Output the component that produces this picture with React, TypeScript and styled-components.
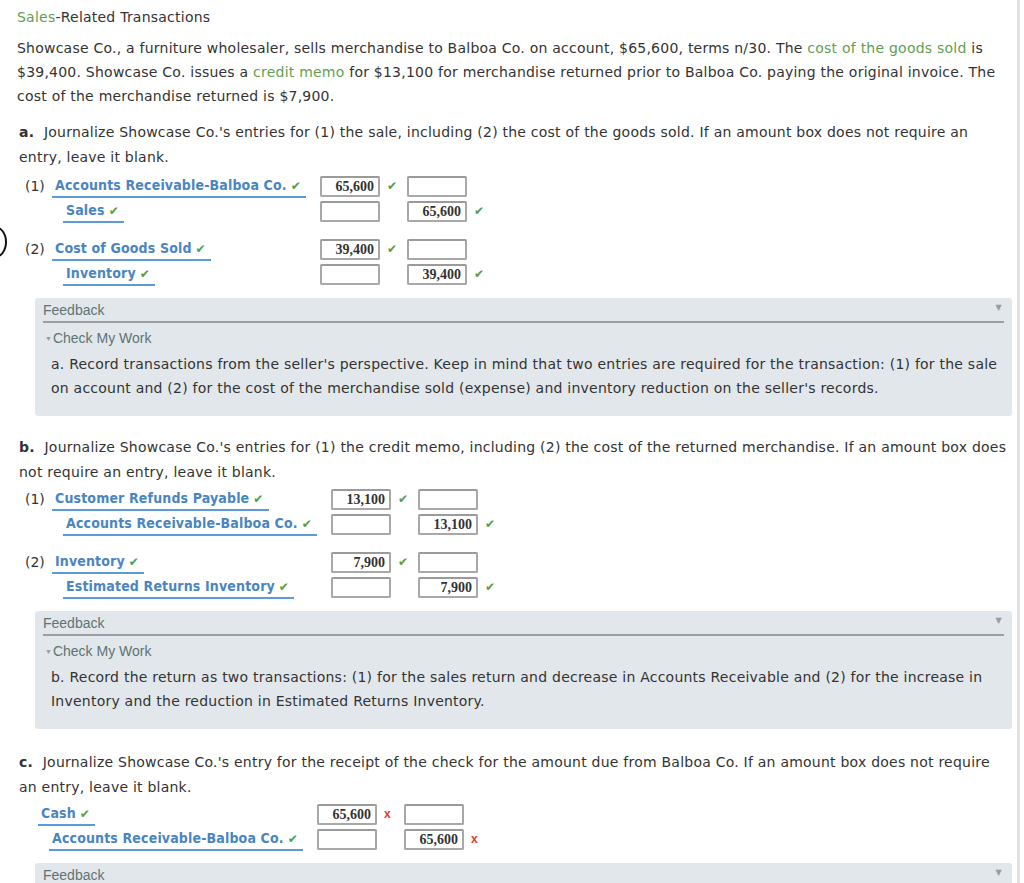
import React from 'react';
import styled, { createGlobalStyle } from 'styled-components';

const GlobalStyle = createGlobalStyle`
  html, body {
    margin: 0;
    padding: 0;
    background: #fff;
  }
  body {
    font-family: "DejaVu Sans", Verdana, sans-serif;
    font-size: 14px;
    letter-spacing: 0.23px;
    color: #333;
  }
`;

type Mark = 'ok' | 'bad';

interface Line {
  account: string;
  indent?: boolean;
  debit?: string;
  credit?: string;
}

interface Group {
  num?: string;
  lines: Line[];
}

const Page = styled.div`
  position: relative;
  width: 1017px;
  min-height: 883px;
  border-right: 3px solid #e2e2e2;
  box-sizing: content-box;
  overflow: hidden;
  padding-bottom: 20px;
`;

const Title = styled.div`
  padding: 7px 0 0 17px;
  line-height: 20px;
`;

const Intro = styled.p`
  margin: 9px 0 0;
  padding: 0 4px 0 17px;
  line-height: 24px;
`;

const Green = styled.span`
  color: #5f9f52;
`;

const Question = styled.p<{ $gap: number }>`
  margin: ${(p) => p.$gap}px 0 0;
  padding: 0 10px 0 19px;
  line-height: 25px;
`;

const Letter = styled.b`
  font-weight: bold;
  margin-right: 5px;
`;

const Journal = styled.div<{ $left: number; $top: number; $numbered: boolean }>`
  display: grid;
  grid-template-columns: ${(p) => (p.$numbered ? '27px' : '0px')} auto 60px 27px 60px auto;
  justify-content: start;
  align-items: center;
  margin: ${(p) => p.$top}px 0 0 ${(p) => p.$left}px;
`;

const Spacer = styled.div`
  grid-column: 1 / -1;
  height: 13px;
`;

const Num = styled.div`
  height: 25px;
  line-height: 25px;
  letter-spacing: 0;
`;

const AccountCell = styled.div<{ $indent?: boolean }>`
  height: 25px;
  display: flex;
  align-items: center;
  padding-left: ${(p) => (p.$indent ? 11 : 0)}px;
  padding-right: 14px;
`;

const Account = styled.span`
  display: inline-block;
  font-family: "DejaVu Sans Condensed", "DejaVu Sans", sans-serif;
  font-weight: bold;
  font-size: 14px;
  letter-spacing: 0.15px;
  line-height: 18px;
  color: #4a85c2;
  padding: 0 5px 1px 3px;
  border-bottom: 2px solid #5c9bd9;
  white-space: nowrap;
`;

const Tick = styled.span`
  color: #4fa046;
  font-family: "DejaVu Sans", sans-serif;
  font-weight: normal;
  font-size: 12px;
  margin-left: 4px;
`;

const Amount = styled.div`
  box-sizing: border-box;
  width: 60px;
  height: 21px;
  border: 2px solid #a8a8a8;
  border-top-color: #9a9a9a;
  border-radius: 2px;
  background: #fff;
  font-family: "Liberation Serif", "Times New Roman", serif;
  font-weight: bold;
  font-size: 14px;
  letter-spacing: 0;
  line-height: 17px;
  color: #333;
  text-align: right;
  padding-right: 4px;
`;

const MarkCell = styled.div<{ $mark: Mark }>`
  height: 25px;
  line-height: 25px;
  padding-left: 7px;
  font-size: 12px;
  font-family: ${(p) => (p.$mark === 'ok' ? '"DejaVu Sans", sans-serif' : '"Liberation Sans", Arial, sans-serif')};
  font-weight: ${(p) => (p.$mark === 'ok' ? 'normal' : 'bold')};
  color: ${(p) => (p.$mark === 'ok' ? '#4fa046' : '#e8382f')};
`;

const FeedbackBox = styled.div`
  margin: 11px 5px 0 35px;
  padding: 3px 8px 16px;
  background: #e2e7eb;
  border-radius: 3px;
  position: relative;
`;

const FeedbackHead = styled.div`
  font-family: "Liberation Sans", Arial, sans-serif;
  font-size: 14px;
  letter-spacing: 0;
  line-height: 18px;
  color: #5e7474;
  border-bottom: 2px solid #9b9fa2;
  padding-bottom: 2px;
`;

const Arrow = styled.span`
  position: absolute;
  right: 10px;
  top: 5px;
  font-size: 8px;
  color: #9a9a9a;
`;

const CheckHead = styled.div`
  margin-top: 6px;
  font-family: "Liberation Sans", Arial, sans-serif;
  font-size: 14px;
  letter-spacing: 0;
  line-height: 18px;
  color: #5e7474;
`;

const SmallArrow = styled.span`
  font-size: 7px;
  color: #9a9a9a;
  margin: 0 1px 0 2px;
  vertical-align: 2px;
`;

const FeedbackText = styled.p`
  margin: 4px 0 0 8px;
  line-height: 24px;
`;

const Cursor = styled.div`
  position: absolute;
  left: -17px;
  top: 226px;
  width: 20px;
  height: 28px;
  border: 2.5px solid #111;
  border-radius: 50%;
`;

const partA: Group[] = [
  {
    num: '(1)',
    lines: [
      { account: 'Accounts Receivable-Balboa Co.', debit: '65,600' },
      { account: 'Sales', indent: true, credit: '65,600' },
    ],
  },
  {
    num: '(2)',
    lines: [
      { account: 'Cost of Goods Sold', debit: '39,400' },
      { account: 'Inventory', indent: true, credit: '39,400' },
    ],
  },
];

const partB: Group[] = [
  {
    num: '(1)',
    lines: [
      { account: 'Customer Refunds Payable', debit: '13,100' },
      { account: 'Accounts Receivable-Balboa Co.', indent: true, credit: '13,100' },
    ],
  },
  {
    num: '(2)',
    lines: [
      { account: 'Inventory', debit: '7,900' },
      { account: 'Estimated Returns Inventory', indent: true, credit: '7,900' },
    ],
  },
];

const partC: Group[] = [
  {
    lines: [
      { account: 'Cash', debit: '65,600' },
      { account: 'Accounts Receivable-Balboa Co.', indent: true, credit: '65,600' },
    ],
  },
];

const MarkSign = ({ mark }: { mark: Mark }) => (
  <MarkCell $mark={mark}>{mark === 'ok' ? '✔' : 'x'}</MarkCell>
);

interface JournalProps {
  groups: Group[];
  left: number;
  top: number;
  mark: Mark;
}

const JournalTable = ({ groups, left, top, mark }: JournalProps) => (
  <Journal $left={left} $top={top} $numbered={groups.some((g) => !!g.num)}>
    {groups.map((g, gi) => (
      <React.Fragment key={gi}>
        {gi > 0 && <Spacer />}
        {g.lines.map((l, li) => (
          <React.Fragment key={li}>
            <Num>{li === 0 ? g.num : ''}</Num>
            <AccountCell $indent={l.indent}>
              <Account>
                {l.account}
                <Tick>✔</Tick>
              </Account>
            </AccountCell>
            <Amount>{l.debit}</Amount>
            {l.debit ? <MarkSign mark={mark} /> : <div />}
            <Amount>{l.credit}</Amount>
            {l.credit ? <MarkSign mark={mark} /> : <div />}
          </React.Fragment>
        ))}
      </React.Fragment>
    ))}
  </Journal>
);

const Feedback = ({ children, open = true }: { children?: React.ReactNode; open?: boolean }) => (
  <FeedbackBox>
    <FeedbackHead>Feedback</FeedbackHead>
    <Arrow>▼</Arrow>
    {open && (
      <>
        <CheckHead>
          <SmallArrow>▼</SmallArrow>Check My Work
        </CheckHead>
        <FeedbackText>{children}</FeedbackText>
      </>
    )}
  </FeedbackBox>
);

export default function App() {
  return (
    <Page>
      <GlobalStyle />
      <Cursor />
      <Title>
        <Green>Sales</Green>-Related Transactions
      </Title>
      <Intro>
        Showcase Co., a furniture wholesaler, sells merchandise to Balboa Co. on account, $65,600, terms n/30. The{' '}
        <Green>cost of the goods sold</Green> is $39,400. Showcase Co. issues a <Green>credit memo</Green> for
        $13,100 for merchandise returned prior to Balboa Co. paying the original invoice. The cost of the
        merchandise returned is $7,900.
      </Intro>

      <Question $gap={12}>
        <Letter>a.</Letter> Journalize Showcase Co.'s entries for (1) the sale, including (2) the cost of the goods
        sold. If an amount box does not require an entry, leave it blank.
      </Question>
      <JournalTable groups={partA} left={25} top={4} mark="ok" />
      <Feedback>
        a. Record transactions from the seller's perspective. Keep in mind that two entries are required for the
        transaction: (1) for the sale on account and (2) for the cost of the merchandise sold (expense) and
        inventory reduction on the seller's records.
      </Feedback>

      <Question $gap={19}>
        <Letter>b.</Letter> Journalize Showcase Co.'s entries for (1) the credit memo, including (2) the cost of
        the returned merchandise. If an amount box does not require an entry, leave it blank.
      </Question>
      <JournalTable groups={partB} left={25} top={2} mark="ok" />
      <Feedback>
        b. Record the return as two transactions: (1) for the sales return and decrease in Accounts Receivable
        and (2) for the increase in Inventory and the reduction in Estimated Returns Inventory.
      </Feedback>

      <Question $gap={21}>
        <Letter>c.</Letter> Journalize Showcase Co.'s entry for the receipt of the check for the amount due from
        Balboa Co. If an amount box does not require an entry, leave it blank.
      </Question>
      <JournalTable groups={partC} left={38} top={2} mark="bad" />
      <Feedback open={false} />
    </Page>
  );
}
